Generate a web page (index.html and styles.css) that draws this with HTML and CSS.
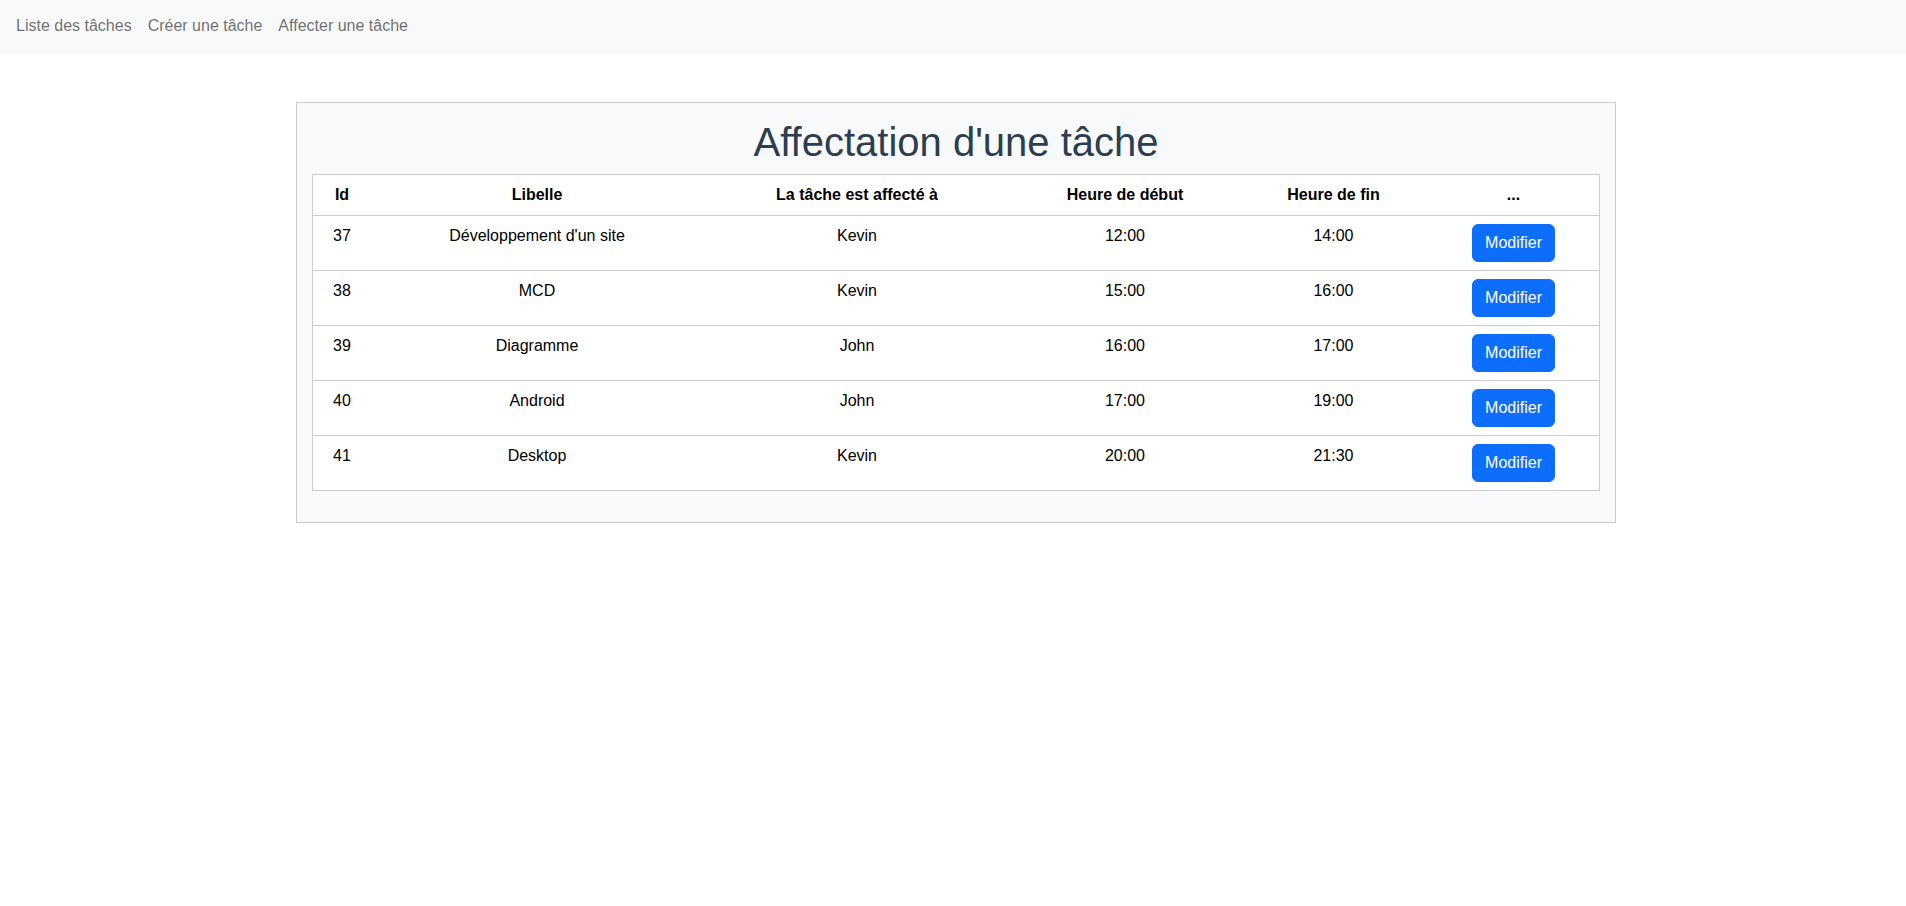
FILE: index.html
```html
<!DOCTYPE html>
<html lang="fr">
<head>
<meta charset="utf-8">
<title>Affectation d'une tâche</title>
<link rel="stylesheet" href="styles.css">
</head>
<body>
<nav class="navbar">
  <a class="nav-link" href="#">Liste des tâches</a>
  <a class="nav-link" href="#">Créer une tâche</a>
  <a class="nav-link" href="#">Affecter une tâche</a>
</nav>
<main class="card">
  <h1 class="title">Affectation d'une tâche</h1>
  <table class="table">
    <colgroup>
      <col class="c1"><col class="c2"><col class="c3"><col class="c4"><col class="c5"><col class="c6">
    </colgroup>
    <thead>
      <tr><th>Id</th><th>Libelle</th><th>La tâche est affecté à</th><th>Heure de début</th><th>Heure de fin</th><th>...</th></tr>
    </thead>
    <tbody>
      <tr><td>37</td><td>Développement d'un site</td><td>Kevin</td><td>12:00</td><td>14:00</td><td><button class="btn">Modifier</button></td></tr>
      <tr><td>38</td><td>MCD</td><td>Kevin</td><td>15:00</td><td>16:00</td><td><button class="btn">Modifier</button></td></tr>
      <tr><td>39</td><td>Diagramme</td><td>John</td><td>16:00</td><td>17:00</td><td><button class="btn">Modifier</button></td></tr>
      <tr><td>40</td><td>Android</td><td>John</td><td>17:00</td><td>19:00</td><td><button class="btn">Modifier</button></td></tr>
      <tr><td>41</td><td>Desktop</td><td>Kevin</td><td>20:00</td><td>21:30</td><td><button class="btn">Modifier</button></td></tr>
    </tbody>
  </table>
</main>
</body>
</html>
```

FILE: styles.css
```css
* { box-sizing: border-box; }
html, body { margin: 0; padding: 0; }
body {
  font-family: "Liberation Sans", Arial, sans-serif;
  font-size: 16px;
  line-height: 24px;
  color: #000;
  background: #fff;
}
.navbar {
  display: flex;
  background: #f8f9fa;
  height: 54px;
  padding: 14px 8px 16px;
}
.nav-link {
  padding: 0 8px;
  color: rgba(0, 0, 0, 0.58);
  text-decoration: none;
  line-height: 24px;
}
.card {
  width: 1320px;
  margin: 48px 0 0 296px;
  background: #f8f9fa;
  border: 1px solid #cccccc;
  padding: 15px;
}
.title {
  margin: 0 0 8px;
  font-size: 40px;
  line-height: 48px;
  font-weight: 400;
  color: #2c3e50;
  text-align: center;
}
.table {
  width: 100%;
  table-layout: fixed;
  border-collapse: separate;
  border-spacing: 0;
  background: #fff;
  border: 1px solid #cccccc;
  margin-bottom: 16px;
  color: #000;
}
.c1 { width: 58px; }
.c2 { width: 332px; }
.c3 { width: 308px; }
.c4 { width: 228px; }
.c5 { width: 189px; }
.c6 { width: 171px; }
.table th, .table td {
  padding: 8px;
  text-align: center;
  vertical-align: top;
  border-bottom: 1px solid #cccccc;
  line-height: 24px;
}
.table tbody tr:last-child td { border-bottom: none; }
.table th { font-weight: 700; }
.btn {
  display: inline-block;
  font-family: "Liberation Sans", Arial, sans-serif;
  font-size: 16px;
  line-height: 24px;
  padding: 6px 12px;
  color: #fff;
  background: #0d6efd;
  border: 1px solid #0d6efd;
  border-radius: 6px;
  cursor: pointer;
  vertical-align: top;
}
```
